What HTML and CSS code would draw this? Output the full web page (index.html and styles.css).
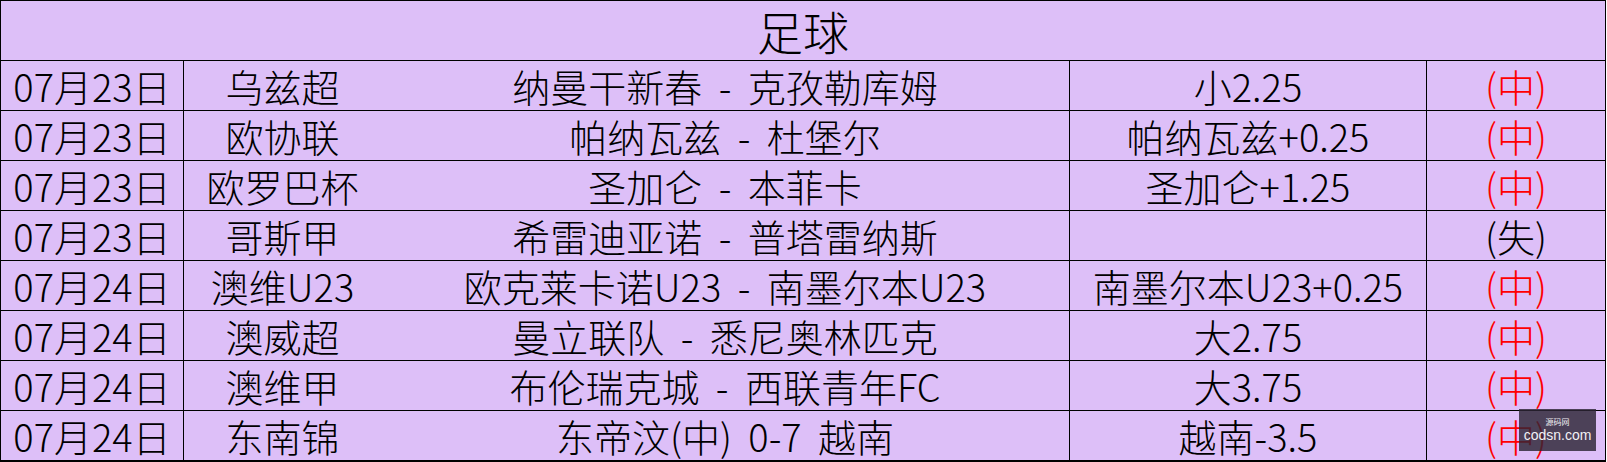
FILE: index.html
```html
<!DOCTYPE html>
<html lang="zh-CN">
<head>
<meta charset="utf-8">
<title>足球</title>
<link rel="stylesheet" href="styles.css">
</head>
<body>
<div class="sheet">
  <div class="title">足球</div>
  <div class="row"><div class="c date">07月23日</div><div class="c league">乌兹超</div><div class="c match">纳曼干新春 - 克孜勒库姆</div><div class="c tip">小2.25</div><div class="c res hit">(中)</div></div>
  <div class="row"><div class="c date">07月23日</div><div class="c league">欧协联</div><div class="c match">帕纳瓦兹 - 杜堡尔</div><div class="c tip">帕纳瓦兹+0.25</div><div class="c res hit">(中)</div></div>
  <div class="row"><div class="c date">07月23日</div><div class="c league">欧罗巴杯</div><div class="c match">圣加仑 - 本菲卡</div><div class="c tip">圣加仑+1.25</div><div class="c res hit">(中)</div></div>
  <div class="row"><div class="c date">07月23日</div><div class="c league">哥斯甲</div><div class="c match">希雷迪亚诺 - 普塔雷纳斯</div><div class="c tip"></div><div class="c res">(失)</div></div>
  <div class="row"><div class="c date">07月24日</div><div class="c league">澳维U23</div><div class="c match">欧克莱卡诺U23 - 南墨尔本U23</div><div class="c tip">南墨尔本U23+0.25</div><div class="c res hit">(中)</div></div>
  <div class="row"><div class="c date">07月24日</div><div class="c league">澳威超</div><div class="c match">曼立联队 - 悉尼奥林匹克</div><div class="c tip">大2.75</div><div class="c res hit">(中)</div></div>
  <div class="row"><div class="c date">07月24日</div><div class="c league">澳维甲</div><div class="c match">布伦瑞克城 - 西联青年FC</div><div class="c tip">大3.75</div><div class="c res hit">(中)</div></div>
  <div class="row last"><div class="c date">07月24日</div><div class="c league">东南锦</div><div class="c match">东帝汶(中) 0-7 越南</div><div class="c tip">越南-3.5</div><div class="c res hit">(中)</div></div>
  <div class="mark"><span class="mark-top">源码网</span><span class="mark-url">codsn.com</span></div>
</div>
</body>
</html>
```
FILE: styles.css
```css
html, body {
  margin: 0;
  padding: 0;
  background: #ffffff;
}
.sheet {
  position: relative;
  width: 1604px;
  border: 1px solid #000;
  background: #ddbff8;
  font-family: "Noto Sans CJK SC", "Noto Sans", sans-serif;
  font-weight: 300;
  color: #000;
}
.title {
  height: 59px;
  line-height: 59px;
  text-align: center;
  font-size: 46px;
  border-bottom: 1px solid #000;
}
.row {
  display: grid;
  grid-template-columns: 183px 197px 689px 357px 178px;
  height: 49px;
  border-bottom: 1px solid #000;
  font-size: 38px;
  line-height: 49px;
}
.c {
  text-align: center;
  white-space: nowrap;
  overflow: visible;
}
.date, .match, .tip {
  border-right: 1px solid #000;
}
.match {
  word-spacing: 8px;
}
.res.hit {
  color: #ff0000;
}
.mark {
  position: absolute;
  left: 1518px;
  top: 408px;
  width: 77px;
  height: 42px;
  background: rgba(44, 36, 52, 0.82);
  display: flex;
  flex-direction: column;
  align-items: center;
  justify-content: center;
  font-family: "Liberation Sans", "Noto Sans CJK SC", sans-serif;
  font-weight: 400;
  color: #f2f0f4;
}
.mark-top {
  font-size: 8px;
  line-height: 9px;
}
.mark-url {
  font-size: 14px;
  line-height: 16px;
}
```
